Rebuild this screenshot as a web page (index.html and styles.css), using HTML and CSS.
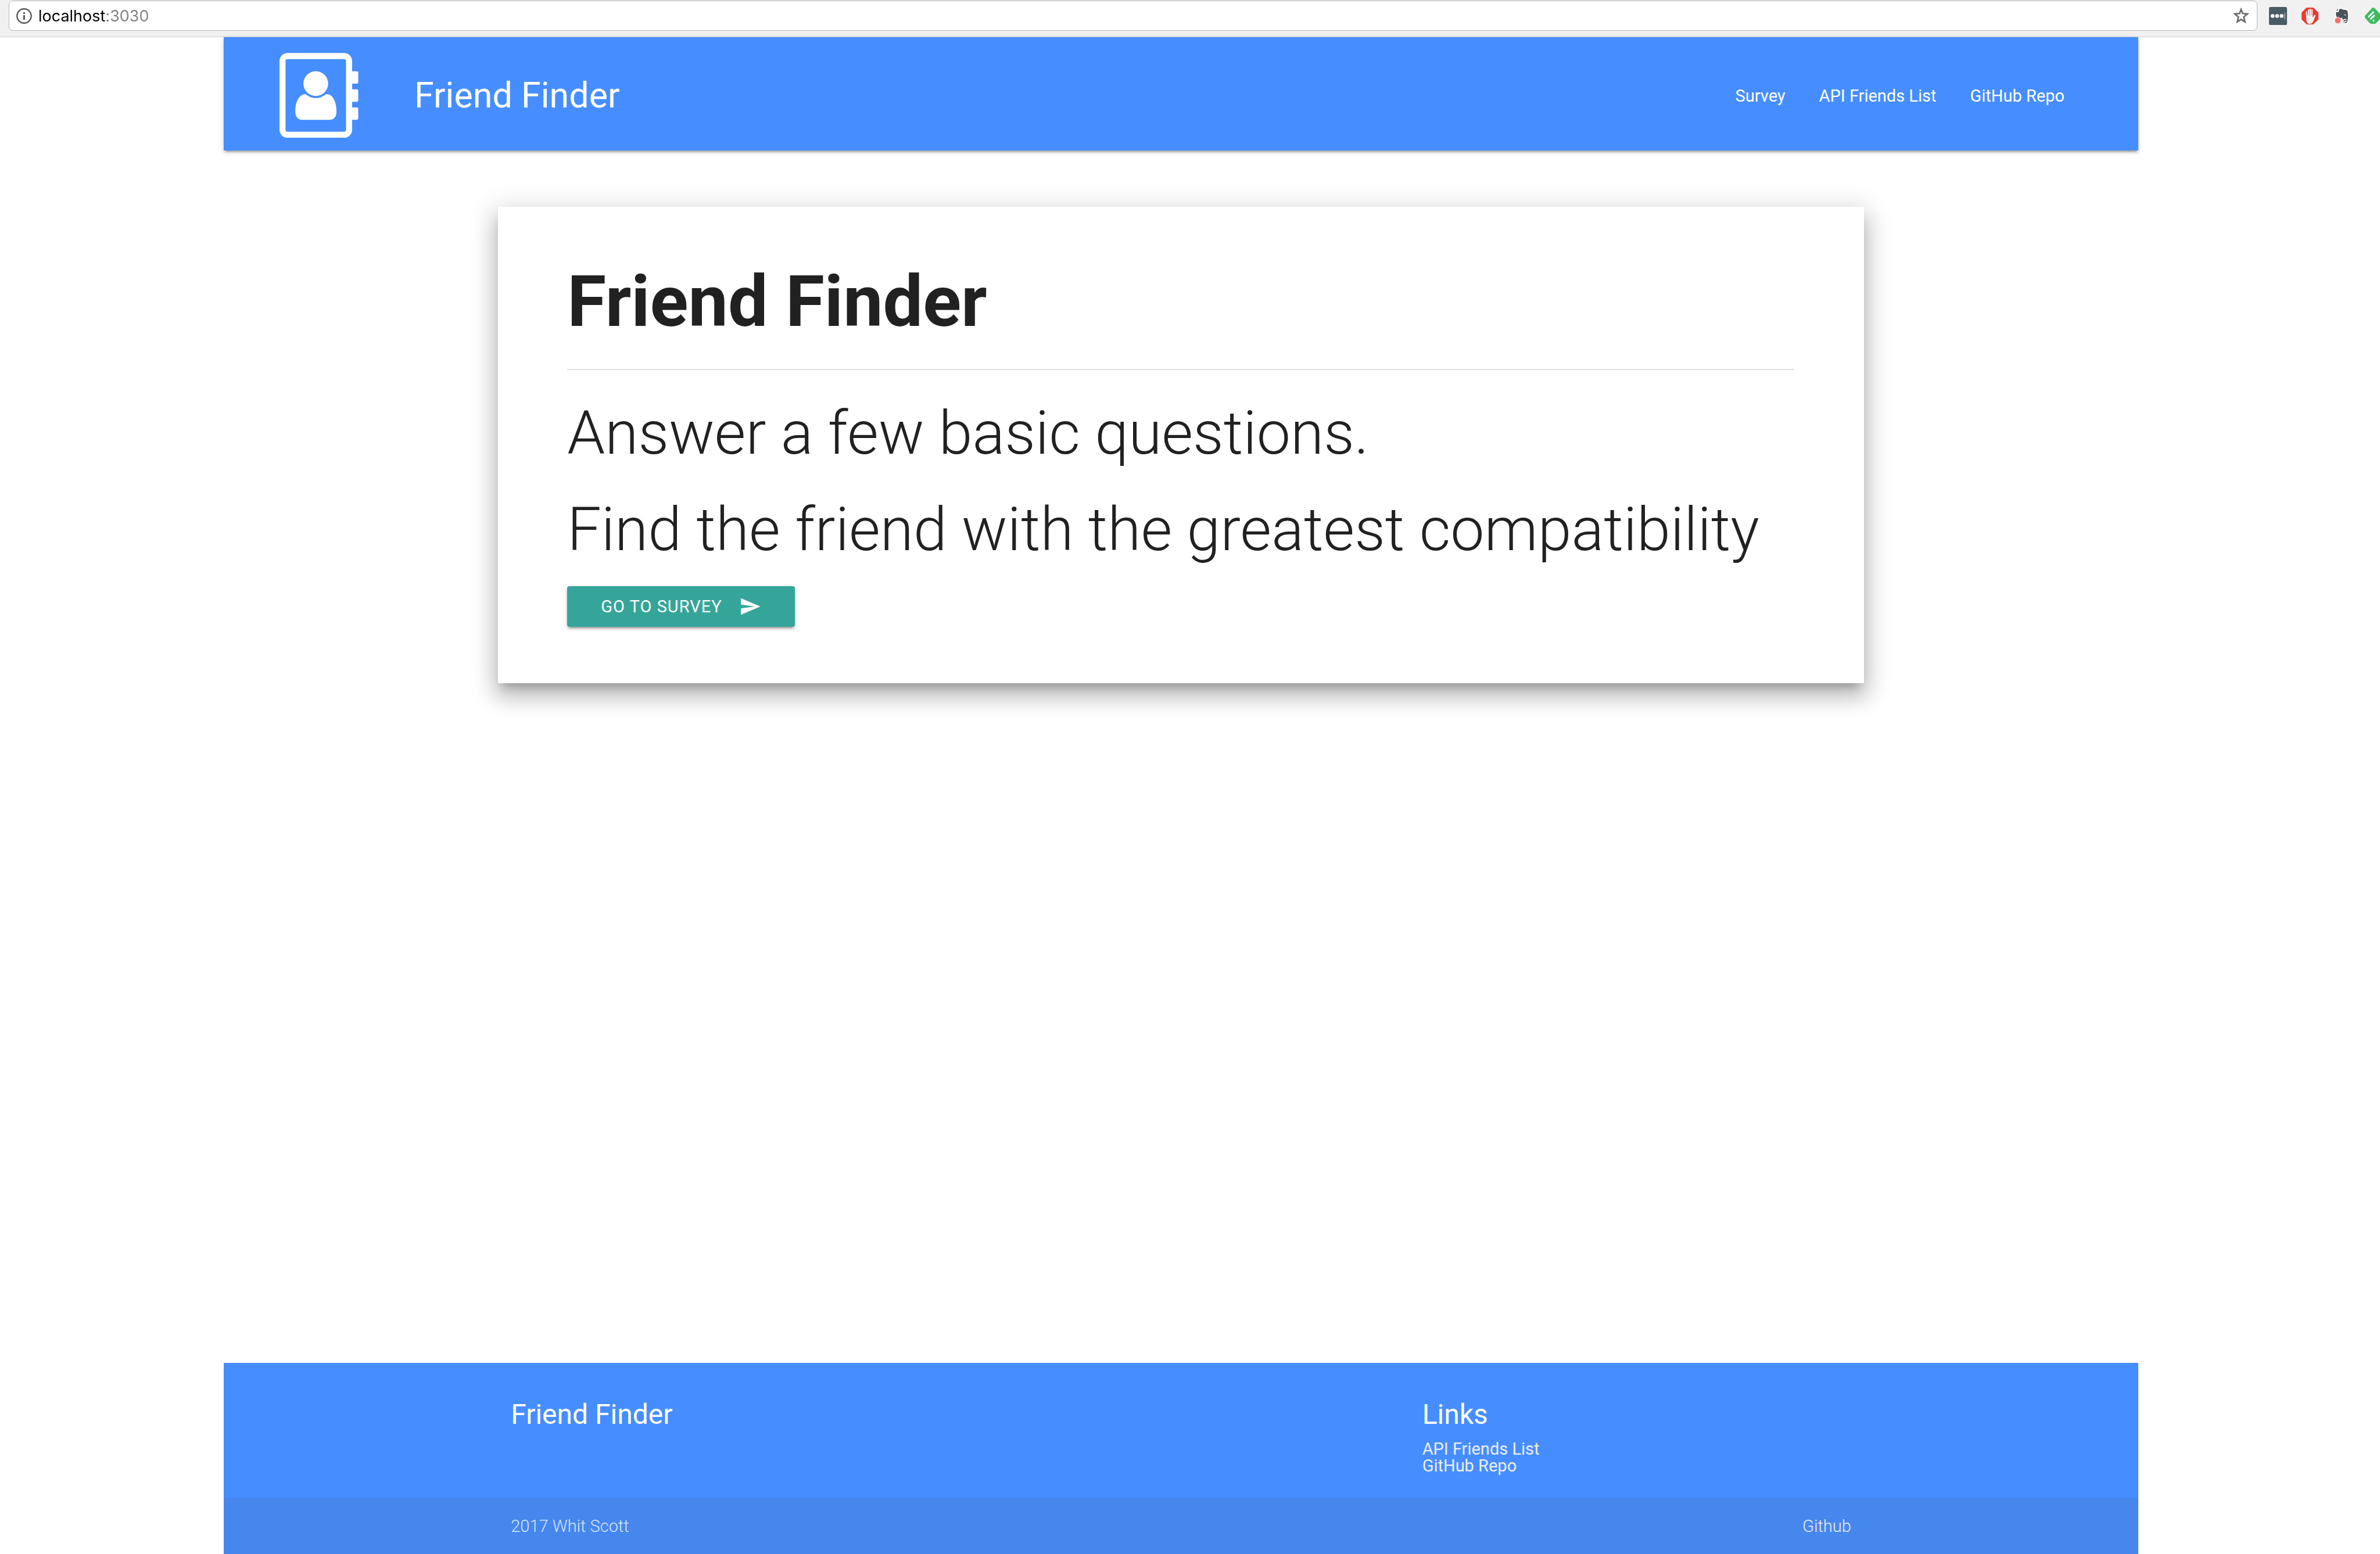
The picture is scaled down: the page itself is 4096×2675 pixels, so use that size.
FILE: index.html
```html
<!DOCTYPE html>
<html lang="en">
<head>
<meta charset="utf-8">
<meta name="viewport" content="width=device-width, initial-scale=1">
<title>Friend Finder</title>
<link rel="stylesheet" href="styles.css">
</head>
<body>
<div class="toolbar">
  <div class="omnibox">
    <svg class="info-icon" viewBox="0 0 27 27" aria-hidden="true">
      <circle cx="13.5" cy="13.5" r="12.2" fill="none" stroke="#5a5a5a" stroke-width="2.4"/>
      <path d="M12 7h3v3h-3zM12 12h3v8h-3z" fill="#5a5a5a"/>
    </svg>
    <input class="address" type="text" aria-label="Address" value="localhost:3030">
    <button class="bookmark" type="button" aria-label="Bookmark this page">
      <svg class="bookmark-icon" viewBox="0 0 85 84" aria-hidden="true">
        <path d="M42.500 9.000L50.700 30.500L75.500 32.500L56.500 49.000L62.500 74.500L42.500 61.500L22.500 74.500L28.500 49.000L9.500 32.500L34.300 30.500Z" fill="none" stroke="#6a6a6a" stroke-width="8"/>
      </svg>
    </button>
  </div>
  <div class="extensions">
    <svg class="extension" viewBox="0 0 96 96" aria-hidden="true">
      <rect width="96" height="96" rx="8" fill="#4b5b66"/>
      <circle cx="19" cy="48" r="10" fill="#fff"/><circle cx="43" cy="48" r="10" fill="#fff"/><circle cx="67" cy="48" r="10" fill="#fff"/>
      <path d="M82 30h5v36h-5z" fill="#a9b1b6"/>
    </svg>
    <svg class="extension" viewBox="0 0 96 96" aria-hidden="true">
      <path d="M30 3h36l27 27v36L66 93H30L3 66V30z" fill="#ea3a2f"/>
      <path d="M26 27c0-5 7-5 7 0l2 20h2V17c0-5 7-5 7 0v28h2V12c0-5 7-5 7 0v33h2V16c0-5 7-5 7 0v40l8-11c3-4 9-2 7 2L67 73c-4 11-9 17-20 17-12 0-17-7-18-19z" fill="#f2f2f2"/>
    </svg>
    <svg class="extension" viewBox="0 0 96 96" aria-hidden="true">
      <path d="M32 8C40 6 48 6 53 11C62 12 75 11 80 19C84 36 84 62 79 80C76 90 68 90 58 89C48 87 46 78 50 68L46 60L40 66C26 66 14 58 13 40L14 24L28 24Z" fill="#4a545a" stroke="#fff" stroke-width="6" stroke-linejoin="round"/>
      <path d="M14 20L28 6V20Z" fill="#4a545a" stroke="#fff" stroke-width="3"/>
      <path d="M59 44c2-7 10-7 12 1-4 2-9 2-12-1z" fill="#b9bec1"/>
      <path d="M72 68C62 62 52 70 54 78C58 84 66 82 66 76H73" fill="none" stroke="#fff" stroke-width="5"/>
      <circle cx="26" cy="72" r="17" fill="#f9736d" stroke="#fff" stroke-width="3"/>
    </svg>
    <svg class="extension" viewBox="0 0 96 96" aria-hidden="true">
      <path d="M38 6q7-6 14 0l37 39q5 5 0 10L60 86q-4 4-10 4H36q-6 0-10-4L0 57q-5-5 0-10z" fill="#3dbb5f"/>
      <path d="M21 52L44 28M32 63L49 46M46 73l1-1" stroke="#fff" stroke-width="9" stroke-linecap="round"/>
    </svg>
  </div>
</div>

<div class="page">
  <header class="navbar">
    <a class="brand" href="#">
      <svg class="brand-icon" viewBox="0 0 140 150" aria-hidden="true">
        <rect x="5.300" y="5.500" width="118" height="139.500" rx="9" fill="none" stroke="#fff" stroke-width="10.800"/>
        <path d="M128 32.500h9q2.500 0 2.500 2.500v17q0 2.500-2.500 2.500h-9zM128 64.500h9q2.500 0 2.500 2.500v17q0 2.500-2.500 2.500h-9zM128 96.500h9q2.500 0 2.500 2.500v17q0 2.500-2.500 2.500h-9z" fill="#fff"/>
        <circle cx="64.300" cy="54.300" r="21.900" fill="#fff"/>
        <path d="M46.500 73C52 78 58 80 64.300 80S77 78 82 73C94 72 101 86 101 104C101 113 96 118.500 89 118.500H40C33 118.500 28 113 28 104C28 86 35 73 46.500 73Z" fill="#fff"/>
      </svg>
      <span class="brand-name">Friend Finder</span>
    </a>
    <nav class="nav-links">
      <a href="#">Survey</a>
      <a href="#">API Friends List</a>
      <a href="#">GitHub Repo</a>
    </nav>
  </header>

  <main class="container">
    <section class="card">
      <h1 class="card-title">Friend Finder</h1>
      <hr class="divider">
      <h2 class="lead">Answer a few basic questions.</h2>
      <h2 class="lead">Find the friend with the greatest compatibility</h2>
      <button class="survey-button" type="button">
        <span>GO TO SURVEY</span>
        <svg class="send-icon" viewBox="0 0 24 24" aria-hidden="true"><path d="M2.010 21L23 12 2.010 3 2 10l15 2-15 2z" fill="#fff"/></svg>
      </button>
    </section>
  </main>

  <footer class="footer">
    <div class="footer-main">
      <div class="container footer-grid">
        <h5 class="footer-title">Friend Finder</h5>
        <div class="footer-links">
          <h5 class="footer-title">Links</h5>
          <ul class="link-list">
            <li><a href="#">API Friends List</a></li>
            <li><a href="#">GitHub Repo</a></li>
          </ul>
        </div>
      </div>
    </div>
    <div class="copyright">
      <div class="container copyright-row">
        <span>2017 Whit Scott</span>
        <a href="#">Github</a>
      </div>
    </div>
  </footer>
</div>
</body>
</html>
```
FILE: styles.css
```css
* {
  box-sizing: border-box;
}

body {
  margin: 0;
  min-height: 100vh;
  display: flex;
  flex-direction: column;
  background: #fff;
  color: #212121;
  font-family: Roboto, sans-serif;
  font-size: 29px;
  overflow-x: hidden;
}

h1, h2, h5, ul {
  margin: 0;
  padding: 0;
}

a {
  color: inherit;
  text-decoration: none;
}

button {
  border: 0;
  padding: 0;
  background: none;
  font: inherit;
  cursor: pointer;
}

svg {
  display: block;
  flex: none;
}

/* Browser toolbar */
.toolbar {
  display: flex;
  align-items: center;
  gap: 20px;
  padding: 1px 0 10px 15px;
  background: #f1f1f1;
  border-bottom: 1px solid #cfcfcf;
  overflow: hidden;
}

.omnibox {
  flex: 1;
  display: flex;
  align-items: center;
  gap: 11px;
  height: 52px;
  padding: 0 13px 0 12px;
  background: #fff;
  border: 1px solid #b4b4b4;
  border-radius: 7px;
}

.info-icon {
  width: 27px;
  height: 27px;
}

.address {
  flex: 1;
  min-width: 0;
  border: 0;
  padding: 2px 0 0;
  outline: 0;
  font: 27px/36px Inter, sans-serif;
  color: transparent;
  background: linear-gradient(90deg, #000 117px, #808080 117px);
  background-clip: text;
  -webkit-background-clip: text;
}

.bookmark-icon {
  width: 28px;
  height: 28px;
}

.extensions {
  display: flex;
  gap: 24px;
  width: 191px;
}

.extension {
  width: 31px;
  height: 31px;
}

/* Page shell */
.page {
  flex: 1;
  display: flex;
  flex-direction: column;
  width: 81%;
  max-width: 3295px;
  margin: 0 31px 0 0;
  align-self: center;
}

.container {
  width: 70%;
  margin: 0 auto;
}

/* Header */
.navbar {
  display: flex;
  align-items: center;
  justify-content: space-between;
  height: 195px;
  padding: 4px 98px 0 96px;
  background: #468eff;
  color: #fff;
  box-shadow: 0 4px 4px 0 rgba(0, 0, 0, .14), 0 2px 10px 0 rgba(0, 0, 0, .12), 0 6px 2px -4px rgba(0, 0, 0, .2);
}

.brand {
  display: flex;
  align-items: center;
  gap: 96px;
}

.brand-icon {
  width: 136px;
  height: 146px;
}

.brand-name {
  font-size: 61px;
}

.nav-links {
  display: flex;
  padding-top: 2px;
}

.nav-links a {
  padding: 0 29px;
}

/* Welcome card */
.card {
  margin: 97px -22px;
  padding: 97px 121px 97px 119px;
  background: #fff;
  box-shadow: 0 23px 33px 4px rgba(0, 0, 0, .15), 0 10px 43px 8px rgba(0, 0, 0, .14), 0 14px 16px -8px rgba(0, 0, 0, .22);
}

.card-title {
  font-size: 122px;
  line-height: 134px;
  font-weight: 700;
}

.divider {
  height: 2px;
  margin: 48px 0 52px;
  border: 0;
  background: #e0e0e0;
}

.lead {
  font-size: 104px;
  line-height: 114px;
  font-weight: 300;
}

.lead + .lead {
  margin-top: 52px;
}

.survey-button {
  display: flex;
  align-items: center;
  gap: 29px;
  height: 70px;
  margin-top: 40px;
  padding: 0 58px;
  border-radius: 4px;
  background: #36a599;
  color: #fff;
  letter-spacing: 1px;
  box-shadow: 0 4px 4px 0 rgba(0, 0, 0, .14), 0 2px 10px 0 rgba(0, 0, 0, .12), 0 6px 2px -4px rgba(0, 0, 0, .2);
}

.send-icon {
  width: 38px;
  height: 38px;
}

/* Footer */
.footer {
  margin-top: auto;
  background: #468eff;
  color: #fff;
}

.footer-main {
  padding: 62px 0 40px;
}

.footer-grid {
  display: grid;
  grid-template-columns: 68fr 32fr;
}

.footer-title {
  font-size: 48px;
  line-height: 53px;
  font-weight: 400;
}

.link-list {
  margin-top: 19px;
  list-style: none;
  line-height: 29px;
  color: #eee;
}

.copyright {
  background: #4687ed;
  font-weight: 300;
  color: rgba(255, 255, 255, .8);
}

.copyright-row {
  display: flex;
  align-items: center;
  justify-content: space-between;
  height: 97px;
}

.copyright a {
  color: #eee;
}
```
